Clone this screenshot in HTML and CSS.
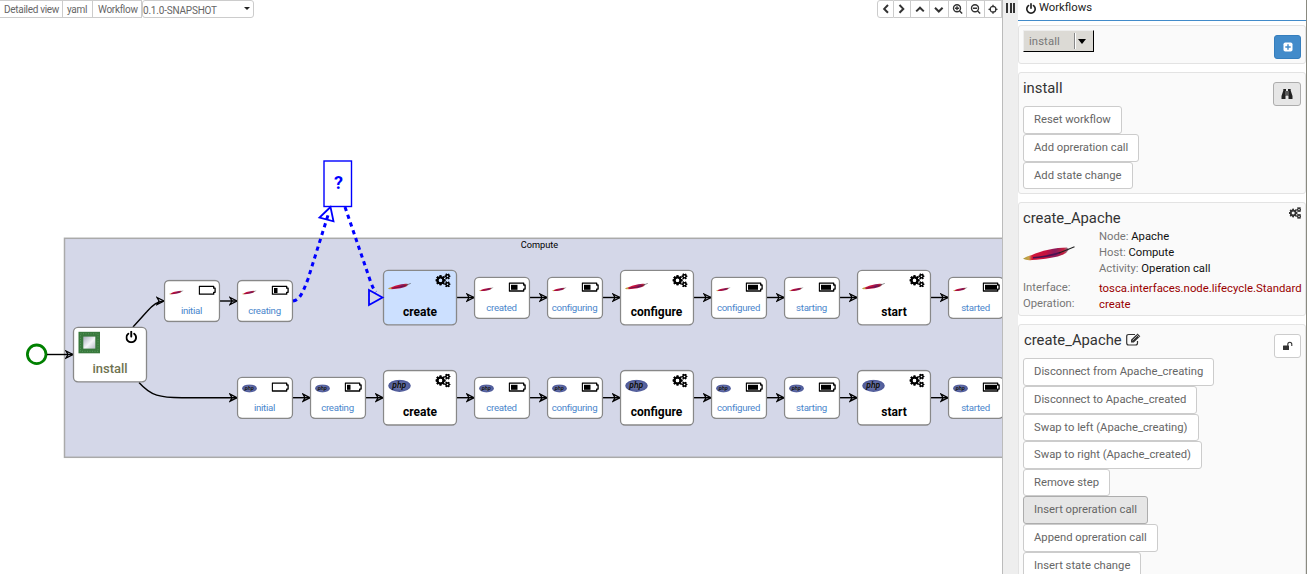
FILE: index.html
```html
<!DOCTYPE html>
<html lang="en">
<head>
<meta charset="utf-8">
<title>Workflows</title>
<link rel="stylesheet" href="styles.css">
</head>
<body>
<svg class="defs" width="0" height="0">
  <defs>
    <linearGradient id="feather" x1="0" x2="1"><stop offset="0" stop-color="#a99a3c"/><stop offset=".13" stop-color="#c9a24a"/><stop offset=".2" stop-color="#d3163a"/><stop offset=".5" stop-color="#c5123f"/><stop offset=".7" stop-color="#8a1a5c"/><stop offset=".88" stop-color="#c41e3e"/><stop offset="1" stop-color="#8a8a9c"/></linearGradient>
    <linearGradient id="chip" x1="0" y1="0" x2="1" y2="1"><stop offset="0" stop-color="#a9adbb"/><stop offset=".55" stop-color="#f4f5f8"/><stop offset="1" stop-color="#b9bcc8"/></linearGradient>
    <radialGradient id="phpfill"><stop offset="0" stop-color="#8088b8"/><stop offset="1" stop-color="#4a5696"/></radialGradient>
    <marker id="arrow" viewBox="0 0 9 10" refX="8.500" refY="5" markerWidth="9" markerHeight="10" markerUnits="userSpaceOnUse" orient="auto"><path d="M1.500 1.500 8.500 5 1.500 8.500 3.500 5Z" fill="none" stroke="#000" stroke-width="1.300"/></marker>
    <symbol id="i-cogs" viewBox="0 0 1920 1792"><path fill="currentColor" d="M896 896q0-106-75-181t-181-75-181 75-75 181 75 181 181 75 181-75 75-181zm768 512q0-52-38-90t-90-38-90 38-38 90q0 53 37.500 90.500t90.500 37.500 90.500-37.500 37.500-90.500zm0-1024q0-52-38-90t-90-38-90 38-38 90q0 53 37.500 90.500t90.500 37.500 90.500-37.500 37.500-90.500zm-384 421v185q0 10-7 19.500t-16 10.500l-155 24q-11 35-32 76 34 48 90 115 7 11 7 20 0 12-7 19-23 30-82.500 89.500t-78.500 59.500q-11 0-21-7l-115-90q-37 19-77 31-11 108-23 155-7 24-30 24h-186q-11 0-20-7.500t-10-17.500l-23-153q-34-10-75-31l-118 89q-7 7-20 7-11 0-21-8-144-133-144-160 0-9 7-19 10-14 41-53t47-61q-23-44-35-82l-152-24q-10-1-17-9.500t-7-19.500v-185q0-10 7-19.500t16-10.500l155-24q11-35 32-76-34-48-90-115-7-11-7-20 0-12 7-20 22-30 82-89t79-59q11 0 21 7l115 90q34-18 77-32 11-108 23-154 7-24 30-24h186q11 0 20 7.500t10 17.500l23 153q34 10 75 31l118-89q8-7 20-7 11 0 21 8 144 133 144 160 0 8-7 19-12 16-42 54t-45 60q23 48 34 82l152 23q10 2 17 10.500t7 19.500zm640 533v140q0 16-149 31-12 27-30 52 51 113 51 138 0 4-4 7-122 71-124 71-8 0-46-47t-52-68q-20 2-30 2t-30-2q-14 21-52 68t-46 47q-2 0-124-71-4-3-4-7 0-25 51-138-18-25-30-52-149-15-149-31v-140q0-16 149-31 13-29 30-52-51-113-51-138 0-4 4-7 4-2 35-20t59-34 30-16q8 0 46 46.500t52 67.500q20-2 30-2t30 2q51-71 92-112l6-2q4 0 124 70 4 3 4 7 0 25-51 138 17 23 30 52 149 15 149 31zm0-1024v140q0 16-149 31-12 27-30 52 51 113 51 138 0 4-4 7-122 71-124 71-8 0-46-47t-52-68q-20 2-30 2t-30-2q-14 21-52 68t-46 47q-2 0-124-71-4-3-4-7 0-25 51-138-18-25-30-52-149-15-149-31v-140q0-16 149-31 13-29 30-52-51-113-51-138 0-4 4-7 4-2 35-20t59-34 30-16q8 0 46 46.500t52 67.500q20-2 30-2t30 2q51-71 92-112l6-2q4 0 124 70 4 3 4 7 0 25-51 138 17 23 30 52 149 15 149 31z"/></symbol>
    <symbol id="i-power" viewBox="128 0 1536 1664"><path fill="currentColor" d="M1664 896q0 156-61 298t-164 245-245 164-298 61-298-61-245-164-164-245-61-298q0-182 80.500-343t226.500-270q43-32 95.500-25t83.500 50q32 42 24.500 94.500t-49.500 84.500q-98 74-151.500 181t-53.500 228q0 104 40.500 198.500t109.500 163.500 163.500 109.500 198.500 40.500 198.500-40.500 163.500-109.500 109.500-163.500 40.500-198.500q0-121-53.500-228t-151.500-181q-42-32-49.500-84.500t24.500-94.500q31-43 84-50t95 25q146 109 226.500 270t80.500 343zm-640-768v640q0 52-38 90t-90 38-90-38-38-90v-640q0-52 38-90t90-38 90 38 38 90z"/></symbol>
    <symbol id="i-feather" viewBox="0 0 52 15"><path d="M0 12.800C3 10.500 5 10 9 9C17 5 33 1.500 44 1.500L46 3.500L43 7C36 11.500 22 13 9 14Q4 14.800 0 12.800Z" fill="url(#feather)"/><path d="M10 11.800Q28 10 37 6.500" fill="none" stroke="#4a1050" stroke-width="1.600"/><path d="M36 7Q44 4 51.500 .8" fill="none" stroke="#222" stroke-width="1.100"/></symbol>
    <symbol id="i-php" viewBox="0 0 23 13"><ellipse cx="11.500" cy="6.300" rx="11.300" ry="6.100" fill="url(#phpfill)"/><text x="11.300" y="8.500" class="php">php</text></symbol>
    <symbol id="i-batt" viewBox="0 0 18 11"><path d="M.8 1.300H15.200V3.200H16.600V7.300H15.200V9.200H.8Z" fill="#fff" stroke="#000" stroke-width="1.300" stroke-linejoin="round"/></symbol>
    <symbol id="small" viewBox="0 0 57 43"><rect x="1" y="1" width="55" height="41" rx="4.500" fill="#fff" stroke="#888" stroke-width="1.300"/></symbol>
    <symbol id="big" viewBox="0 0 75 57"><rect x="1" y="1" width="73" height="54.500" rx="4.500" fill="#fff" stroke="#888" stroke-width="1.300"/><use href="#i-cogs" x="53" y="4" width="15" height="14"/><use href="#i-cogs" x="53" y="4" width="15" height="14"/></symbol>
  </defs>
</svg>

<div class="app">
  <main class="stage">
    <div class="toolbar">
      <div class="tools">
        <span class="tool">Detailed view</span><span class="tool yaml">yaml</span><span class="tool wf">Workflow</span><span class="version">0.1.0-SNAPSHOT<i class="caret"></i></span>
      </div>
      <div class="tools nav">
        <span class="tool ico"><svg viewBox="0 0 12 12"><path d="M8 2 4.200 5.900 8 9.800"/></svg></span><span class="tool ico n2"><svg viewBox="0 0 12 12"><path d="M3.500 2 7.300 5.900 3.500 9.800"/></svg></span><span class="tool ico wide"><svg viewBox="0 0 12 12"><path d="M2.200 8.400 6 4.700 9.800 8.400"/></svg></span><span class="tool ico wide"><svg viewBox="0 0 12 12"><path d="M2 4.800 5.800 8.500 9.600 4.800"/></svg></span><span class="tool ico z"><svg viewBox="0 0 12 12" class="thin"><circle cx="5" cy="5.300" r="3.500"/><path d="M7.600 7.900 10.200 10.500M3 5.300H7M5 3.300V7.300"/></svg></span><span class="tool ico z"><svg viewBox="0 0 12 12" class="thin"><circle cx="5" cy="5.300" r="3.500"/><path d="M7.600 7.900 10.200 10.500M3 5.300H7"/></svg></span><span class="tool ico z last"><svg viewBox="0 0 12 12" class="fine"><circle cx="6" cy="6.300" r="2.900"/><path d="M6 1.800V4.300M6 8.300V10.800M1.500 6.300H4M8 6.300H10.500"/></svg></span>
      </div>
    </div>
    <svg class="graph" width="1002" height="554" viewBox="0 20 1002 554">
      <rect x="64.500" y="238.300" width="960" height="219" fill="#d4d7e8" stroke="#aaa" stroke-width="1.500"/>
      <text x="539.500" y="248" class="zone">Compute</text>

      <circle cx="36.700" cy="354.300" r="9.300" fill="#fff" stroke="#008000" stroke-width="2.800"/>
      <g class="edges">
        <path d="M47 354.500H73"/>
        <path d="M133 327L147 311.500Q156 301 164 301"/>
        <path d="M139 382.500C151 396 160 397.700 182 397.700H237"/>
        <path d="M220 301H237"/>
        <path d="M457 297.500H474"/><path d="M529 297.500H547"/><path d="M602 297.500H620"/><path d="M694 297.500H711"/><path d="M766 297.500H784"/><path d="M840 297.500H857"/><path d="M931 297.500H948"/>
        <path d="M293 397.700H310"/><path d="M365 397.700H383"/><path d="M457 397.700H474"/><path d="M529 397.700H547"/><path d="M602 397.700H620"/><path d="M694 397.700H711"/><path d="M766 397.700H784"/><path d="M840 397.700H857"/><path d="M931 397.700H948"/>
      </g>

      <g transform="translate(72.500 326.300)"><rect x="1" y="1" width="73" height="54.500" rx="4.500" fill="#fff" stroke="#888" stroke-width="1.300"/>
        <rect x="6" y="5.500" width="21.500" height="21.500" fill="#39793d"/><rect x="8" y="7.500" width="17.500" height="17.500" fill="none" stroke="#629f66" stroke-dasharray="1 1.500" stroke-width=".8"/><rect x="10.800" y="10.300" width="12" height="12" fill="url(#chip)"/>
        <use href="#i-power" x="53" y="4.500" width="11.500" height="12.500"/><text x="37.500" y="46.500" class="op install">install</text></g>

      <g transform="translate(163.500 279.500)"><use href="#small" width="57" height="43"/><use href="#i-feather" x="5.500" y="10.500" width="14.500" height="5"/><use href="#i-batt" x="35" y="5.500" width="18" height="11"/><text x="28" y="34.500" class="state">initial</text></g>
      <g transform="translate(236.500 279.500)"><use href="#small" width="57" height="43"/><use href="#i-feather" x="5.500" y="10.500" width="14.500" height="5"/><use href="#i-batt" x="35" y="5.500" width="18" height="11"/><rect x="37.500" y="8.500" width="3.500" height="5"/><text x="28" y="34.500" class="state">creating</text></g>

      <g transform="translate(382.500 269.300)"><rect x="1" y="1" width="73" height="54.500" rx="4.500" fill="#cce0ff" stroke="#888" stroke-width="1.300"/><use href="#i-cogs" x="53" y="4" width="15" height="14"/><use href="#i-cogs" x="53" y="4" width="15" height="14"/><use href="#i-feather" x="5.500" y="13.500" width="23" height="7"/><text x="37.500" y="46.500" class="op">create</text></g>
      <g transform="translate(473.500 276.300)"><use href="#small" width="57" height="43"/><use href="#i-feather" x="5.500" y="10.500" width="14.500" height="5"/><use href="#i-batt" x="35" y="5.500" width="18" height="11"/><rect x="37.500" y="8.500" width="6.500" height="5"/><text x="28" y="34.800" class="state">created</text></g>
      <g transform="translate(546.500 276.300)"><use href="#small" width="57" height="43"/><use href="#i-feather" x="5.500" y="10.500" width="14.500" height="5"/><use href="#i-batt" x="35" y="5.500" width="18" height="11"/><rect x="37.500" y="8.500" width="6.500" height="5"/><text x="28" y="34.800" class="state">configuring</text></g>
      <g transform="translate(619.500 269.300)"><use href="#big" width="75" height="57"/><use href="#i-feather" x="5.500" y="13.500" width="23" height="7"/><text x="37" y="46.500" class="op">configure</text></g>
      <g transform="translate(710.500 276.300)"><use href="#small" width="57" height="43"/><use href="#i-feather" x="5.500" y="10.500" width="14.500" height="5"/><use href="#i-batt" x="35" y="5.500" width="18" height="11"/><rect x="37.500" y="8.500" width="10" height="5"/><text x="28" y="34.800" class="state">configured</text></g>
      <g transform="translate(783.500 276.300)"><use href="#small" width="57" height="43"/><use href="#i-feather" x="5.500" y="10.500" width="14.500" height="5"/><use href="#i-batt" x="35" y="5.500" width="18" height="11"/><rect x="37.500" y="8.500" width="10" height="5"/><text x="28" y="34.800" class="state">starting</text></g>
      <g transform="translate(856.500 269.300)"><use href="#big" width="75" height="57"/><use href="#i-feather" x="5.500" y="13.500" width="23" height="7"/><text x="37.500" y="46.500" class="op">start</text></g>
      <g transform="translate(947.500 276.300)"><use href="#small" width="57" height="43"/><use href="#i-feather" x="5.500" y="10.500" width="14.500" height="5"/><use href="#i-batt" x="35" y="5.500" width="18" height="11"/><rect x="37.500" y="8.500" width="12" height="5"/><text x="28" y="34.800" class="state">started</text></g>

      <g transform="translate(236.500 376.300)"><use href="#small" width="57" height="43"/><use href="#i-php" x="5.500" y="8" width="15" height="8.500"/><use href="#i-batt" x="35" y="5.500" width="18" height="11"/><text x="28" y="34.800" class="state">initial</text></g>
      <g transform="translate(309.500 376.300)"><use href="#small" width="57" height="43"/><use href="#i-php" x="5.500" y="8" width="15" height="8.500"/><use href="#i-batt" x="35" y="5.500" width="18" height="11"/><rect x="37.500" y="8.500" width="3.500" height="5"/><text x="28" y="34.800" class="state">creating</text></g>
      <g transform="translate(382.500 369.500)"><use href="#big" width="75" height="57"/><use href="#i-php" x="5.500" y="10" width="23" height="13"/><text x="37.500" y="46.500" class="op">create</text></g>
      <g transform="translate(473.500 376.300)"><use href="#small" width="57" height="43"/><use href="#i-php" x="5.500" y="8" width="15" height="8.500"/><use href="#i-batt" x="35" y="5.500" width="18" height="11"/><rect x="37.500" y="8.500" width="6.500" height="5"/><text x="28" y="34.800" class="state">created</text></g>
      <g transform="translate(546.500 376.300)"><use href="#small" width="57" height="43"/><use href="#i-php" x="5.500" y="8" width="15" height="8.500"/><use href="#i-batt" x="35" y="5.500" width="18" height="11"/><rect x="37.500" y="8.500" width="6.500" height="5"/><text x="28" y="34.800" class="state">configuring</text></g>
      <g transform="translate(619.500 369.500)"><use href="#big" width="75" height="57"/><use href="#i-php" x="5.500" y="10" width="23" height="13"/><text x="37" y="46.500" class="op">configure</text></g>
      <g transform="translate(710.500 376.300)"><use href="#small" width="57" height="43"/><use href="#i-php" x="5.500" y="8" width="15" height="8.500"/><use href="#i-batt" x="35" y="5.500" width="18" height="11"/><rect x="37.500" y="8.500" width="10" height="5"/><text x="28" y="34.800" class="state">configured</text></g>
      <g transform="translate(783.500 376.300)"><use href="#small" width="57" height="43"/><use href="#i-php" x="5.500" y="8" width="15" height="8.500"/><use href="#i-batt" x="35" y="5.500" width="18" height="11"/><rect x="37.500" y="8.500" width="10" height="5"/><text x="28" y="34.800" class="state">starting</text></g>
      <g transform="translate(856.500 369.500)"><use href="#big" width="75" height="57"/><use href="#i-php" x="5.500" y="10" width="23" height="13"/><text x="37.500" y="46.500" class="op">start</text></g>
      <g transform="translate(947.500 376.300)"><use href="#small" width="57" height="43"/><use href="#i-php" x="5.500" y="8" width="15" height="8.500"/><use href="#i-batt" x="35" y="5.500" width="18" height="11"/><rect x="37.500" y="8.500" width="12" height="5"/><text x="28" y="34.800" class="state">started</text></g>

      <g class="preview">
        <rect x="324" y="161" width="27.500" height="45.500" fill="#fff" stroke-width="1.400"/>
        <path class="dash" d="M293 301C300 300 303 292 308 279L329 212"/>
        <path class="dash" d="M345 207L370 280Q373 289 376 292"/>
        <path d="M330.500 207 319.500 217.500 333.500 221.300Z"/>
        <path d="M382.500 297.500 369 290V305Z"/>
      </g>
      <text x="338.500" y="189" class="question">?</text>
    </svg>
  </main>

  <div class="gutter"><i></i><i></i><i></i></div>

  <aside class="panel">
    <header class="head"><svg width="10" height="11"><use href="#i-power" width="10" height="11"/></svg>Workflows</header>
    <section class="card pick">
      <div class="select"><span>install</span><b></b></div>
      <span class="btn sq blue"><svg width="10" height="10" viewBox="0 0 10 10"><rect x=".5" y=".5" width="9" height="9" rx="1.800" fill="#fff"/><path d="M5 2.300V7.700M2.300 5H7.700" stroke="#428bca" stroke-width="1.400"/></svg></span>
    </section>
    <section class="card wfcard">
      <div class="row"><h3>install</h3><span class="btn sq pressed"><svg width="12" height="12" viewBox="0 0 12 12"><path fill="#222" d="M2.300 1H5V3H7V1H9.700V2.500L11.500 8V11H7.500V7.500H4.500V11H.5V8L2.300 2.500Z"/><path d="M5 3V7M7 3V7" stroke="#ddd" stroke-width=".6"/></svg></span></div>
      <div class="list"><span class="btn">Reset workflow</span><span class="btn">Add opreration call</span><span class="btn">Add state change</span></div>
    </section>
    <section class="card info">
      <div class="row"><h3>create_Apache</h3><svg width="12.500" height="12"><use href="#i-cogs" width="12.500" height="12"/><use href="#i-cogs" width="12.500" height="12"/></svg></div>
      <div class="summary">
        <svg width="52" height="15"><use href="#i-feather" width="52" height="15"/></svg>
        <div><p>Node: <b>Apache</b></p><p>Host: <b>Compute</b></p><p>Activity: <b>Operation call</b></p></div>
      </div>
      <dl><dt>Interface:</dt><dd>tosca.interfaces.node.lifecycle.Standard</dd><dt>Operation:</dt><dd>create</dd></dl>
    </section>
    <section class="card step">
      <div class="row"><h3>create_Apache <svg width="15" height="13" viewBox="0 0 15 13"><path d="M11.500 8V10Q11.500 12 9.500 12H2.700Q.7 12 .7 10V3.500Q.7 1.500 2.700 1.500H9" fill="none" stroke="#333" stroke-width="1.200"/><path d="M5 9.500V6.800L11.500.5 14.300 3.200 7.800 9.500Z" fill="#333"/><path d="M6.500 7.500 11 3M10.500 1.500 13.200 4.200" stroke="#fafafa" stroke-width=".6"/></svg></h3><span class="btn sq"><svg width="11" height="10" viewBox="0 0 11 10"><rect x="1" y="4.500" width="6" height="4.500" rx=".5" fill="#333"/><path d="M5.800 5V3.300Q5.800 1.200 7.800 1.200T9.800 3.300V5" fill="none" stroke="#333" stroke-width="1.100"/></svg></span></div>
      <div class="list"><span class="btn">Disconnect from Apache_creating</span><span class="btn">Disconnect to Apache_created</span><span class="btn">Swap to left (Apache_creating)</span><span class="btn">Swap to right (Apache_created)</span><span class="btn">Remove step</span><span class="btn pressed">Insert opreration call</span><span class="btn">Append opreration call</span><span class="btn">Insert state change</span></div>
    </section>
  </aside>
</div>
</body>
</html>
```

FILE: styles.css
```css
* { box-sizing: border-box; }
body { margin: 0; background: #fff; font-family: Roboto, "Open Sans", sans-serif; color: #333; overflow: hidden; }
h3, p, dl, dd { margin: 0; }
.defs { position: absolute; }
.app { display: flex; width: 1307px; height: 574px; overflow: hidden; }
.stage { width: 1002px; flex: none; }
.toolbar { height: 20px; display: flex; justify-content: space-between; }
.tools { display: flex; height: 18px; }
.tool { border: 1px solid #ccc; border-left-width: 0; height: 18px; line-height: 17px; font-size: 10px; letter-spacing: -.3px; color: #666; padding: 0 4px; width: 63px; white-space: nowrap; }
.yaml { width: 30px; }
.wf { width: 49px; padding-left: 5px; }
.version { width: 112px; height: 18px; border: 1px solid #ccc; border-radius: 3px; font-size: 10px; letter-spacing: -.2px; line-height: 19px; color: #666; display: flex; justify-content: space-between; white-space: nowrap; }
.caret { border: 3.5px solid transparent; border-top: 3px solid #222; border-bottom: 0; margin: 6px 3px 0 0; height: 3px; }
.ico { width: 17px; padding: 0; display: flex; align-items: center; justify-content: center; }
.ico:first-child { border-left-width: 1px; border-radius: 3px 0 0 3px; }
.ico.wide { width: 19px; }
.ico.z { width: 18px; }
.ico.last { width: 17px; }
.ico svg { width: 12px; height: 12px; fill: none; stroke: #333; stroke-width: 2; }
.ico svg.thin { stroke-width: 1.4; }
.ico svg.fine { stroke-width: 1.3; }
.graph { display: block; color: #000; }
.edges path { fill: none; stroke: #000; stroke-width: 1.4; marker-end: url(#arrow); }
.state { font-size: 9.7px; letter-spacing: -.3px; fill: #4a86cc; text-anchor: middle; }
.op { font-size: 12px; font-weight: 700; text-anchor: middle; fill: #000; }
.install { fill: #6f7350; font-size: 13px; font-weight: 500; }
.zone { font-size: 9.2px; text-anchor: middle; fill: #000; }
.php { font: italic 700 8.5px Roboto, sans-serif; text-anchor: middle; fill: #111; }
.preview { fill: none; stroke: #00f; stroke-width: 1.8; }
.preview .dash { stroke-width: 3; stroke-dasharray: 4.2 4; }
.question { fill: #00f; font-weight: 700; font-size: 18px; text-anchor: middle; }
.gutter { width: 16px; flex: none; background: #eee; border-left: 1px solid #bbb; display: flex; gap: 1px; padding: 3px 0 0 3px; }
.gutter i { width: 2px; height: 10px; background: #333; margin-right: .5px; }
.panel { width: 289px; flex: none; border-right: 1px solid #8a8a80; }
.head { height: 21px; border-bottom: 1px solid #428bca; padding: 0 0 4px 8px; display: flex; align-items: center; gap: 3px; font-size: 11.3px; line-height: 16px; color: #222; }
.card { border: 1px solid #e3e3e3; background: #fafafa; border-radius: 3px; padding-left: 4px; padding-right: 4px; }
.pick { margin-top: 4px; height: 39px; display: flex; justify-content: space-between; }
.select { margin-top: 4px; width: 71px; height: 22px; background: #dcdad5; border: 1px solid #eee; border-right: 1px solid #000; border-bottom: 1px solid #000; color: #777; font-size: 11.3px; letter-spacing: .1px; padding-left: 5px; display: flex; align-items: center; justify-content: space-between; }
.select b { width: 19px; height: 16px; border-left: 1px solid #888; box-shadow: inset 1px 0 #fff; display: flex; align-items: center; padding-left: 3px; }
.select b::after { content: ""; border: 4.5px solid transparent; border-top: 5px solid #000; border-bottom: 0; }
.btn { display: block; border: 1px solid #ccc; border-radius: 3px; background: #fff; color: #666; font-size: 11.25px; height: 27.6px; line-height: 26px; padding: 0 10px; white-space: nowrap; }
.sq { width: 27px; height: 24px; padding: 0; display: flex; align-items: center; justify-content: center; }
.blue { background: #428bca; border-color: #357ebd; margin-top: 9px; }
.pressed { background: #e6e6e6; border-color: #adadad; }
.list { display: flex; flex-direction: column; align-items: flex-start; }
.row { display: flex; justify-content: space-between; align-items: flex-start; }
h3 { font-size: 14.8px; font-weight: 400; line-height: 18px; white-space: nowrap; }
.wfcard { margin-top: 8px; height: 122px; }
.wfcard h3 { margin-top: 6px; }
.wfcard .sq { margin-top: 9px; width: 28px; }
.wfcard .row { height: 33.4px; }
.info { margin-top: 8px; height: 114px; font-size: 11.25px; color: #777; line-height: 16px; padding-right: 3px; }
.info h3 { color: #333; margin-top: 6px; }
.info .row { height: 26px; color: #333; padding-right: 1px; }
.info .row svg { margin-top: 4px; }
.summary { display: grid; grid-template-columns: 76px 1fr; }
.summary svg { margin-top: 17px; }
.info b { font-weight: 400; color: #111; }
.info dl { display: grid; grid-template-columns: 76px 1fr; margin-top: 3px; }
.info dd { color: #900; font-size: 11.35px; white-space: nowrap; }
.step { margin-top: 8px; height: 260px; }
.step .row { height: 33.4px; }
.step h3 { margin: 6px 0 0 1px; }
.step h3 svg { vertical-align: -1px; margin-left: 1px; }
.step .sq { margin-top: 9px; }
```
